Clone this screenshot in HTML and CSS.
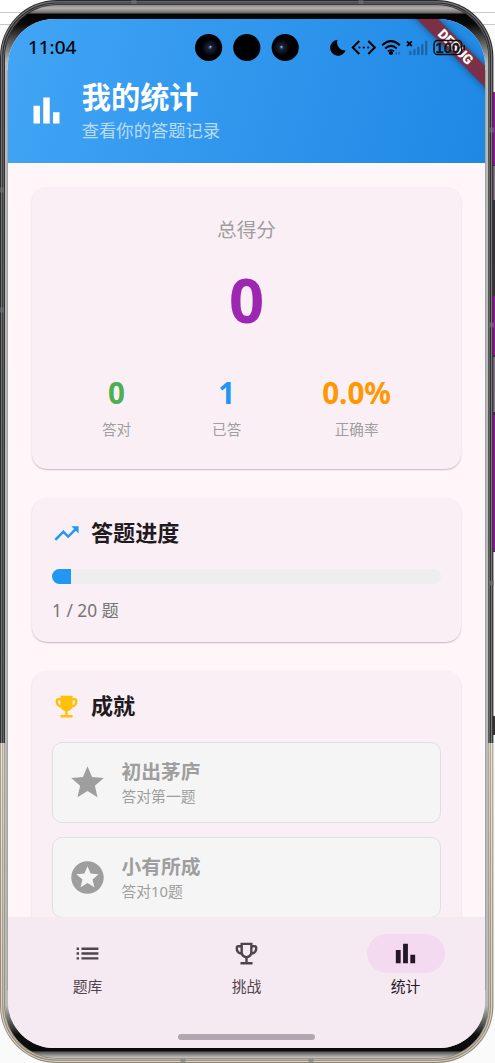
FILE: index.html
```html
<!DOCTYPE html>
<html lang="zh-CN">
<head>
<meta charset="utf-8">
<title>我的统计</title>
<link rel="stylesheet" href="styles.css">
</head>
<body>
<div class="desktop">
<svg class="frame" viewBox="0 0 495 1063">
  <defs>
    <linearGradient id="edge" gradientUnits="userSpaceOnUse" x1="0" y1="0" x2="0" y2="1063">
      <stop offset="0" stop-color="#29292b"/><stop offset=".699" stop-color="#2d2e30"/>
      <stop offset=".699" stop-color="#aaa292"/><stop offset="1" stop-color="#8d8475"/>
    </linearGradient>
    <linearGradient id="band" gradientUnits="userSpaceOnUse" x1="0" y1="0" x2="0" y2="1063">
      <stop offset="0" stop-color="#77777a"/><stop offset=".699" stop-color="#77797b"/>
      <stop offset=".699" stop-color="#e8e0d1"/><stop offset="1" stop-color="#d8cebf"/>
    </linearGradient>
    <linearGradient id="inner" gradientUnits="userSpaceOnUse" x1="0" y1="5" x2="0" y2="1058">
      <stop offset="0" stop-color="#8b8786"/><stop offset=".003" stop-color="#b5b1b0"/><stop offset=".007" stop-color="#777372"/>
      <stop offset=".009" stop-color="#050505"/><stop offset=".018" stop-color="#080808"/>
      <stop offset=".055" stop-color="#bcbcba"/><stop offset=".95" stop-color="#b9bbba"/>
      <stop offset=".978" stop-color="#111"/><stop offset=".993" stop-color="#0a0a0a"/><stop offset=".9945" stop-color="#5c5c5c"/><stop offset="1" stop-color="#c9c8c5"/>
    </linearGradient>
  </defs>
  <rect x="0" y="24" width="495" height="1039" fill="#fafafa"/>
  <path d="M0 12.5H495M0 24.5H495" stroke="#c9c9cb"/>
  <path d="M494 92V552" stroke="#38323b" stroke-width="2"/>
  <path d="M494 92V165M494 296V355M494 415V551" stroke="#9c12a6" stroke-width="2"/>
  <path d="M494 166V200M494 357V412" stroke="#88778b" stroke-width="2"/>
  <path d="M494 716V735" stroke="#333" stroke-width="2"/>
  <rect x="0" y="0" width="493.4" height="1063" rx="57" fill="url(#edge)"/>
  <rect x="1.6" y="1.8" width="490" height="1059.5" rx="55" fill="none" stroke="url(#band)" stroke-width="1.2"/>
  <rect x="3.6" y="3.8" width="486" height="1055.5" rx="53" fill="none" stroke="url(#band)" stroke-width=".8"/>
  <rect x="5" y="5" width="483.3" height="1053" rx="52" fill="url(#inner)"/>
  <path d="M7.4 70V990M485.5 70V990" stroke="#999b9c" stroke-width=".8"/>
  <path d="M134 0V4M361 0V4M183 1059V1063M311 1059V1063M0 190H4M0 310H4M489 130H494M489 325H494M489 583H494" stroke="#77777a" stroke-opacity=".6" stroke-width="5"/>
</svg>
<main class="screen">
  <header class="header">
    <svg class="icon-lg" viewBox="0 0 24 24"><path d="M4 9h4v11H4zm12 4h4v7h-4zm-6-9h4v16h-4z"/></svg>
    <div class="heading"><h1 class="title">我的统计</h1><p class="subtitle">查看你的答题记录</p></div>
  </header>
  <section class="content">
    <article class="card score">
      <p class="score-label">总得分</p>
      <p class="score-value">0</p>
      <div class="stats">
        <div class="stat"><b class="num green">0</b><span class="cap">答对</span></div>
        <div class="stat"><b class="num blue">1</b><span class="cap">已答</span></div>
        <div class="stat"><b class="num orange">0.0%</b><span class="cap">正确率</span></div>
      </div>
    </article>
    <article class="card progress">
      <div class="card-head">
        <svg class="icon blue" viewBox="0 0 24 24"><path d="M16 6l2.29 2.29-4.88 4.88-4-4L2 16.59 3.41 18l6-6 4 4 6.3-6.29L22 12V6z"/></svg>
        <h2 class="card-title">答题进度</h2>
      </div>
      <div class="track"><div class="fill" style="width:5%"></div></div>
      <p class="count">1 / 20 题</p>
    </article>
    <article class="card awards">
      <div class="card-head">
        <svg class="icon amber" viewBox="0 0 24 24"><path d="M19 5h-2V3H7v2H5c-1.1 0-2 .9-2 2v1c0 2.55 1.92 4.63 4.39 4.94.63 1.5 1.98 2.63 3.61 2.96V19H7v2h10v-2h-4v-3.1c1.63-.33 2.98-1.46 3.61-2.96C19.08 12.63 21 10.55 21 8V7c0-1.1-.9-2-2-2zM5 8V7h2v3.82C5.84 10.4 5 9.3 5 8zm14 0c0 1.3-.84 2.4-2 2.82V7h2v1z"/></svg>
        <h2 class="card-title">成就</h2>
      </div>
      <div class="award">
        <svg class="icon-lg" viewBox="0 0 24 24"><path d="M12 17.27L18.18 21l-1.64-7.03L22 9.24l-7.19-.61L12 2 9.19 8.63 2 9.24l5.46 4.73L5.82 21z"/></svg>
        <div class="award-text"><h3 class="award-title">初出茅庐</h3><p class="award-sub">答对第一题</p></div>
      </div>
      <div class="award">
        <svg class="icon-lg" viewBox="0 0 24 24"><path d="M11.99 2C6.47 2 2 6.48 2 12s4.47 10 9.99 10C17.52 22 22 17.52 22 12S17.52 2 11.99 2zm4.24 16L12 15.45 7.77 18l1.12-4.81-3.73-3.23 4.92-.42L12 5l1.92 4.53 4.92.42-3.73 3.23L16.23 18z"/></svg>
        <div class="award-text"><h3 class="award-title">小有所成</h3><p class="award-sub">答对10题</p></div>
      </div>
    </article>
  </section>
  <nav class="nav">
    <div class="tabs">
      <div class="tab"><span class="pill"><svg class="icon" viewBox="0 0 24 24"><path d="M3 13h2v-2H3v2zm0 4h2v-2H3v2zm0-8h2V7H3v2zm4 4h14v-2H7v2zm0 4h14v-2H7v2zM7 7v2h14V7H7z"/></svg></span><span class="tab-label">题库</span></div>
      <div class="tab"><span class="pill"><svg class="icon" viewBox="0 0 24 24"><path d="M19 5h-2V3H7v2H5c-1.1 0-2 .9-2 2v1c0 2.55 1.92 4.63 4.39 4.94.63 1.5 1.98 2.63 3.61 2.96V19H7v2h10v-2h-4v-3.1c1.63-.33 2.98-1.46 3.61-2.96C19.08 12.63 21 10.55 21 8V7c0-1.1-.9-2-2-2zM5 8V7h2v3.82C5.84 10.4 5 9.3 5 8zm7 6c-1.65 0-3-1.35-3-3V5h6v6c0 1.65-1.35 3-3 3zm7-6c0 1.3-.84 2.4-2 2.82V7h2v1z"/></svg></span><span class="tab-label">挑战</span></div>
      <div class="tab active"><span class="pill"><svg class="icon" viewBox="0 0 24 24"><path d="M4 9h4v11H4zm12 4h4v7h-4zm-6-9h4v16h-4z"/></svg></span><span class="tab-label">统计</span></div>
    </div>
    <div class="handle"></div>
  </nav>
  <div class="ribbon">DEBUG</div>
  <div class="status">
    <span class="time">11:04</span>
    <svg class="status-icons" viewBox="185 28 285 40">
      <defs><radialGradient id="lens"><stop offset="0" stop-color="#4668a0"/><stop offset=".3" stop-color="#14203c"/><stop offset=".65" stop-color="#10131f"/><stop offset="1" stop-color="#020203"/></radialGradient></defs>
      <g><circle cx="208.6" cy="47.5" r="13.6"/><circle cx="246.8" cy="47.5" r="13.6"/><circle cx="285.2" cy="47.5" r="13.6"/>
      <circle cx="210" cy="47.5" r="8" fill="url(#lens)"/><circle cx="281.5" cy="47.5" r="8" fill="url(#lens)"/>
      <circle cx="210.5" cy="46.8" r="1" fill="#94b4e2"/><circle cx="281.5" cy="46.8" r="1" fill="#94b4e2"/></g>
      <path d="M337.5 39.8A8 8 0 1 0 345.6 50.6A8.2 8.2 0 0 1 337.5 39.8Z"/>
      <path d="M359.3 41L352.8 47.5L359.3 54M368.3 41L374.8 47.5L368.3 54" fill="none" stroke="#000" stroke-width="2"/>
      <circle cx="359.4" cy="47.5" r="1.1"/><circle cx="363.8" cy="47.5" r="1.1"/><circle cx="368.2" cy="47.5" r="1.1"/>
      <path d="M382.2 45.2Q391 37 399.8 45.2M385.2 48.6Q391 43.2 396.8 48.6" fill="none" stroke="#000" stroke-width="2"/>
      <path d="M387.8 51.4Q391 48.6 394.2 51.4" fill="none" stroke="#000" stroke-width="1.5"/><circle cx="391" cy="53" r="2.1"/>
      <path d="M395 53.2l2-1.8v3.6zM400.6 53.2l-2-1.8v3.6z" fill="#1d60a2"/>
      <path d="M407 41.3l4.8 4.8M411.8 41.3l-4.8 4.8" stroke="#000" stroke-width="1.8"/>
      <path d="M410.4 52v2M414.4 50.3v3.7M418.3 47.8v6.2M422.3 45v9M426.2 41.7v12.3" stroke="#1d65a8" stroke-width="2.4" stroke-linecap="round"/>
      <rect x="434" y="40.6" width="27.6" height="14" rx="3.6" fill="none" stroke="#111" stroke-width="1.5"/>
      <path d="M464.2 45.2v4.8" stroke="#111" stroke-width="1.6"/>
      <text class="battery" x="447.8" y="52.6" text-anchor="middle">100</text>
    </svg>
  </div>
</main>
</div>
</body>
</html>
```

FILE: styles.css
```css
* { box-sizing: border-box; }
body { margin: 0; background: #fff; font-family: "Noto Sans", "Noto Sans CJK SC", sans-serif; overflow: hidden; }
h1, h2, h3, p { margin: 0; }
svg { display: block; fill: currentColor; flex: none; }
.desktop { position: relative; width: 495px; height: 1063px; padding: 19px 10px 15px 8px; }
.frame { position: absolute; left: 0; top: 0; width: 495px; height: 1063px; }
.screen { position: relative; height: 1029px; border-radius: 46px; overflow: hidden; background: #fff6fa; display: flex; flex-direction: column; }
.header { flex: none; height: 144px; padding: 60px 19px 0; display: flex; gap: 15.8px; align-items: flex-start; color: #fff; background: linear-gradient(105deg, #42a5f5, #1e88e5); }
.icon-lg { width: 39px; height: 39px; }
.header .icon-lg { margin-top: 11.5px; }
.title { font-size: 29.2px; line-height: 36px; font-weight: 700; }
.subtitle { font-size: 17.3px; line-height: 32px; color: #b8dbfa; }
.content { flex: 1; min-height: 0; overflow: hidden; padding: 24px 24px 0; display: flex; flex-direction: column; gap: 29px; }
.card { flex: none; border-radius: 15px; background: #faeff5; box-shadow: 0 1px 1.5px rgba(70, 40, 60, .3); }
.score { height: 282px; padding: 31px 29.5px; text-align: center; }
.score-label { font-size: 19.6px; line-height: 24px; color: #9e9e9e; }
.score-value { margin-top: 22px; font-size: 61.5px; line-height: 70px; font-weight: 700; color: #9c27b0; }
.stats { margin-top: 41px; display: flex; justify-content: space-around; }
.stat { display: flex; flex-direction: column; align-items: center; gap: 8px; }
.num { font-size: 29.6px; line-height: 36px; }
.cap { font-size: 14.6px; line-height: 20px; color: #9e9e9e; }
.green { color: #4caf50; }
.blue { color: #2196f3; }
.orange { color: #ff9800; }
.amber { color: #ffc107; }
.progress { height: 144px; padding: 20px; }
.card-head { display: flex; align-items: center; gap: 10px; height: 30px; }
.icon { width: 29px; height: 29px; }
.card-title { padding-bottom: 2px; font-size: 22.1px; line-height: 28px; font-weight: 700; color: #211a20; }
.track { margin-top: 21px; height: 15px; border-radius: 8px; overflow: hidden; background: #eee; }
.fill { height: 100%; background: #2196f3; }
.count { margin-top: 17px; font-size: 17.3px; line-height: 20px; color: #757575; }
.awards { height: 360px; padding: 20px; display: flex; flex-direction: column; }
.award { flex: none; height: 81px; margin-top: 14px; padding: 0 15px; display: flex; align-items: center; gap: 14.5px; border: 1px solid #e0e0e0; border-radius: 10px; background: #f5f5f5; color: #9e9e9e; }
.card-head + .award { margin-top: 21px; }
.award-title { font-size: 19.8px; line-height: 27px; font-weight: 700; }
.award-sub { font-size: 14.8px; line-height: 22px; }
.nav { flex: none; height: 131px; padding-top: 16.5px; background: #f5eaf2; display: flex; flex-direction: column; align-items: center; color: #51434e; }
.tabs { display: flex; width: 100%; }
.tab { flex: 1; display: flex; flex-direction: column; align-items: center; }
.pill { width: 78px; height: 39px; border-radius: 20px; display: flex; align-items: center; justify-content: center; }
.tab-label { margin-top: 3.4px; font-size: 14.8px; line-height: 20px; }
.active { color: #251727; }
.active .pill { background: #f4daf0; }
.handle { margin-top: 38px; width: 137px; height: 6.5px; border-radius: 4px; background: #b2a7b0; }
.ribbon { position: absolute; left: 378.5px; top: 21.5px; width: 140px; height: 14.6px; padding-right: 4px; transform: rotate(45deg); text-align: center; font: 900 13.6px/14.6px Roboto, sans-serif; color: #fff; background: #7c3046; box-shadow: 0 0 7px rgba(0, 0, 0, .45); }
.status { position: absolute; left: 0; top: 9px; width: 477px; height: 40px; display: flex; justify-content: space-between; padding: 0 15px 0 20px; color: #000; }
.time { font-size: 18.9px; line-height: 38px; -webkit-text-stroke: .2px currentColor; }
.status-icons { width: 285px; height: 40px; }
.battery { font: 700 14.6px "Liberation Sans", sans-serif; fill: #15151b; stroke: #15151b; stroke-width: .3px; }
```
